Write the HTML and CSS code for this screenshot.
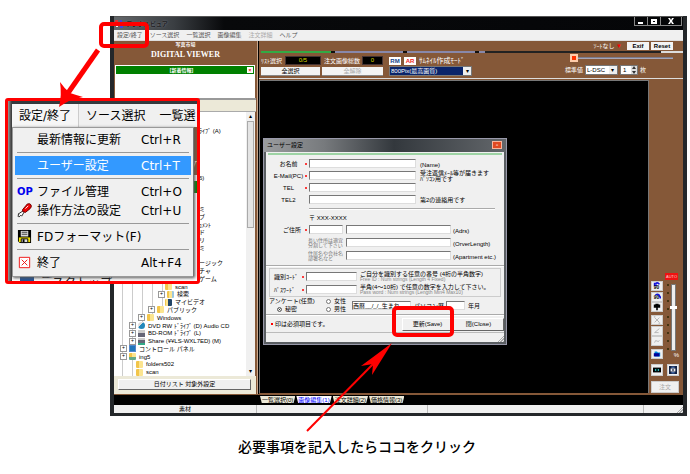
FILE: index.html
```html
<!DOCTYPE html>
<html lang="ja">
<head>
<meta charset="utf-8">
<title>DIGITAL VIEWER</title>
<link rel="stylesheet" href="styles.css">
</head>
<body>
<main class="stage">
  <section class="window">
    <header class="titlebar">
      <svg class="app-icon" viewBox="0 0 8 8"><path fill="#d33" d="M0 0h3v3H0z"/><path fill="#fc3" d="M3 2h3v3H3z"/><path fill="#eee" d="M1 4h2v3H1z"/><path fill="#44d" d="M5 5h3v3H5zM5 0h2v2H5z"/></svg>
      <h1>デジタルビュア</h1>
      <div class="caption-buttons">
        <button aria-label="最小化"><svg viewBox="0 0 12 8"><path d="M3 5h5v2H3z"/></svg></button>
        <button aria-label="最大化"><svg viewBox="0 0 12 8"><path fill-rule="evenodd" d="M3 2h6v5H3zM5 4v1h2V4z"/></svg></button>
        <button aria-label="閉じる"><svg viewBox="0 0 12 8"><path d="M3 1h2l1 2 1-2h2L7 4l2 3H7L6 5 5 7H3l2-3z"/></svg></button>
      </div>
    </header>
    <nav class="menubar">
      <button>設定/終了</button><button>ソース選択</button><button>一覧選択</button><button>画像編集</button><button disabled>注文詳細</button><button>ヘルプ</button>
    </nav>
    <div class="content">
      <aside class="sidebar">
        <div class="brand"><small>写真市場</small><strong>DIGITAL VIEWER</strong></div>
        <div class="news"><div class="news-head"><span>[新着情報]</span><button aria-label="消す">×</button></div></div>
        <div class="tree-head"></div>
        <div class="tree-box">
          <ul class="tree">
            <li></li><li></li>
            <li class="far">ﾗｲﾌﾞ (A)</li>
            <li></li><li></li><li></li><li></li><li></li>
            <li class="far">6)</li>
            <li></li><li></li><li></li>
            <li class="far">ミ</li>
            <li class="far">ブ</li>
            <li class="far">ｭﾒﾝﾄ</li>
            <li class="far">ド</li>
            <li class="far">リ</li>
            <li class="far">ミ</li>
            <li></li>
            <li class="far">ージック</li>
            <li class="far">チャ</li>
            <li class="far">ゲーム</li>
            <li class="d5"><i class="folder"></i>scan</li>
            <li class="d5 plus"><i class="folder find"></i>検索</li>
            <li class="d5"><i class="folder video"></i>マイビデオ</li>
            <li class="d4 plus"><i class="folder"></i>パブリック</li>
            <li class="d3 plus"><i class="folder"></i>Windows</li>
            <li class="d2 plus"><i class="disc"></i>DVD RW ﾄﾞﾗｲﾌﾞ (D) Audio CD</li>
            <li class="d2 plus"><i class="drive"></i>BD-ROM ﾄﾞﾗｲﾌﾞ (L)</li>
            <li class="d2 plus"><i class="drive net"></i>Share (¥¥LS-WXL7ED) (M)</li>
            <li class="d1 plus"><i class="panel"></i>コントロール パネル</li>
            <li class="d1 plus"><i class="folder user"></i>ing5</li>
            <li class="d2"><i class="folder"></i>folders502</li>
            <li class="d2"><i class="folder"></i>scan</li>
          </ul>
          <div class="scrollbar"><span>▴</span><b></b><span>▾</span></div>
        </div>
        <div class="tree-foot"><button class="raised">日付リスト 対象外設定</button></div>
      </aside>
      <section class="viewer">
        <div class="toolbar">
          <div class="tb-left">
            <span class="lbl">ﾘｽﾄ選択</span><output class="lcd">0/5</output>
            <span class="lbl">注文画像総数</span><output class="lcd small">0</output>
            <button class="wide pick">全選択</button><button class="wide clear" disabled>全解除</button>
          </div>
          <div class="tb-mid">
            <div class="mode"><button class="rm">RM</button><button class="ar">AR</button><label for="mode">ｻﾑﾈｲﾙ作成ﾓｰﾄﾞ</label></div>
            <span class="picker navy"><select id="mode"><option>800Pix(最高画質)</option></select></span>
          </div>
          <div class="tb-right">
            <div class="sort"><span>ｿｰﾄなし <em>▼</em></span><button>Exif</button><button>Reset</button></div>
            <input class="size-range" type="range" min="0" max="100" value="0" aria-label="サイズ">
            <div class="std"><label for="std">標準値</label><span class="picker"><select id="std"><option>L-DSC</option></select></span><span class="spin"><input id="qty" value="1" aria-label="枚数"><svg viewBox="0 0 6 8"><path d="M3 0l2 3H1zM3 8L1 5h4z"/></svg></span><label for="qty">枚</label></div>
          </div>
          <div class="progress"><i></i><i></i><i></i></div>
        </div>
        <div class="work">
          <div class="canvas">
            <form class="dialog">
              <header class="dlg-title"><h2>ユーザー設定</h2><button type="button" aria-label="閉じる">▫</button></header>
              <div class="dlg-body">
                <div class="accent"></div>
                <div class="contact">
                  <label class="req" for="name">お名前</label><input id="name"><span class="en">(Name)</span>
                  <label class="req" for="mail">E-Mail(PC)</label><input id="mail"><span class="two">受注返信ﾒｰﾙ等が届きます<br>ﾊﾟｿｺﾝ用です</span>
                  <label class="req" for="tel">TEL</label><input id="tel"><span></span>
                  <label for="tel2">TEL2</label><input id="tel2"><span>第2の連絡用です</span>
                </div>
                <hr class="inset">
                <div class="address">
                  <span class="post">〒 XXX-XXXX</span>
                  <label class="req who" for="zip">ご住所</label><input id="zip"><input aria-label="住所"><span class="en">(Adrs)</span>
                  <span class="hint">長い住所は適宜<br>分割して下さい</span><input aria-label="住所2"><span class="en">(OrverLength)</span>
                  <span class="hint">住居名や会社名<br>部署名など</span><input aria-label="住所3"><span class="en">(Apartment etc.)</span>
                </div>
                <hr>
                <div class="secret">
                  <label class="req" for="code">識別ｺｰﾄﾞ</label><input id="code"><p>ご自分を識別する任意の番号 (4桁の半角数字)<small>Free ID : Num strings (Length 4 Fixed)</small></p>
                  <label class="req" for="pass">ﾊﾟｽﾜｰﾄﾞ</label><input id="pass"><p>半角(4～10桁) で任意の数字を入力して下さい。<small>Pass word : Num strings (Length Min4 Max10)</small></p>
                </div>
                <div class="survey">
                  <div class="q"><span>アンケート(任意)</span><label><input type="radio" name="sex" checked>秘密</label></div>
                  <div class="q2"><label><input type="radio" name="sex">女性</label><label><input type="radio" name="sex">男性</label></div>
                  <input class="birth" value="西暦__/_/_生まれ" aria-label="生年月日"><label for="years">パソコン歴</label><input class="years" id="years"><span class="ym">年月</span>
                </div>
                <hr>
                <div class="actions"><span class="note">印は必須項目です。</span><button type="button" class="raised save">更新(Save)</button><button type="button" class="raised">閉(Close)</button></div>
                <div class="dlg-status"><i class="grip"></i></div>
              </div>
              <div class="ring save-ring"></div>
            </form>
          </div>
          <aside class="tools">
            <div class="tool-main">
              <div class="tool-col">
                <button aria-label="左回転"><svg viewBox="0 0 10 10"><path class="blue" d="M3 2q3-2 5 1M2 1v3h3"/><text x="1" y="9">90</text></svg></button>
                <button aria-label="右回転"><svg viewBox="0 0 10 10"><path class="blue" d="M8 5V3Q5 0 3 3M9 7V4"/><text x="1" y="8">90</text></svg></button>
                <button aria-label="反転"><svg viewBox="0 0 10 10"><path d="M3 1h4v1h2v4H6v3H4V6H1V2h2z"/></svg></button>
                <button class="gap" aria-label="切り取り"><svg viewBox="0 0 10 10"><path class="gray" d="M2 2l6 6M8 2L2 8M1 1h2M7 9h2"/></svg></button>
                <button aria-label="線"><svg viewBox="0 0 10 10"><path class="gray" d="M8 2L2 7h5"/></svg></button>
                <button aria-label="曲線"><svg viewBox="0 0 10 10"><path class="gray" d="M2 7q1-4 3-2t3-1"/></svg></button>
                <button class="gap" aria-label="フォルダ"><svg viewBox="0 0 10 10"><path fill="#08d" d="M2 2h3l1 1h3v5H2z"/><path fill="#009" d="M1 4h7v4H1z"/></svg></button>
              </div>
              <div class="level"><i class="dots"></i><input type="range" value="66" aria-label="明るさ"></div>
              <span class="auto">AUTO</span><span class="pct">%</span>
            </div>
            <div class="pair">
              <button aria-label="全体"><svg viewBox="0 0 10 10"><path d="M0 2h10v6H0z"/><path fill="#3dd" d="M2 5l2-2v4zM8 5L6 3v4z"/></svg></button>
              <button aria-label="拡大"><svg viewBox="0 0 10 10"><path fill="#124" d="M0 0h10v3H0zM0 7h10v3H0zM0 3h2v4H0zM8 3h2v4H8zM4 4h2v2H4z"/><path fill="#7af" d="M3 1h4v1H3zM3 8h4v1H3z"/></svg></button>
            </div>
            <button class="order" disabled>注文</button>
          </aside>
        </div>
      </section>
    </div>
    <nav class="tabs"><a href="#t0">一覧選択(0)</a><a href="#t1" class="on">画像編集(1)</a><a href="#t2">注文詳細(2)</a><a href="#t3">価格情報(3)</a></nav>
    <footer class="status"><span>素材</span><span></span><span></span><span><i class="grip"></i></span></footer>
  </section>
  <p class="caption">必要事項を記入したらココをクリック</p>

  <section class="callout">
    <div class="behind"><b>V</b></div>
    <nav class="big-menubar"><button class="open">設定/終了</button><button>ソース選択</button><button>一覧選</button></nav>
    <div class="big-menu">
      <button><i></i><span>最新情報に更新</span><kbd>Ctrl+R</kbd></button>
      <hr>
      <button class="active"><i></i><span>ユーザー設定</span><kbd>Ctrl+T</kbd></button>
      <hr>
      <button><i class="op">OP</i><span>ファイル管理</span><kbd>Ctrl+O</kbd></button>
      <button><svg viewBox="0 0 16 16"><path fill="#fff" stroke="#222" d="M1 12l6-4 1 1-3 5-1-1-2 2-1-1 1-2z"/><path fill="#e00" stroke="#600" d="M6 7l5-6q3-1 4 1t-1 4l-5 4-3-1z"/><path stroke="#fff" d="M9 6l3-3"/></svg><span>操作方法の設定</span><kbd>Ctrl+U</kbd></button>
      <hr>
      <button><svg viewBox="0 0 16 16"><path d="M1 1h14v14H3l-2-2z"/><path fill="#ddd" d="M4 2h8v6H4z"/><path fill="#444" d="M5 3h6v1H5zM5 5h6v1H5z"/><path fill="#f5e500" d="M2 9h12v5H2z"/><path fill="#ddd" stroke="#000" d="M4.500 10.500h7v4h-7z"/><path d="M6 11h2v3H6z"/></svg><span>FDフォーマット(F)</span></button>
      <hr>
      <button><svg viewBox="0 0 16 16"><path fill="#fff" stroke="#e11" d="M2.500 2.500h11v11h-11zM5 5l6 6M11 5l-6 6"/></svg><span>終了</span><kbd>Alt+F4</kbd></button>
    </div>
    <div class="peek"><i></i><span>デスクトップ</span></div>
  </section>
  <div class="ring menu-ring"></div>
  <svg class="arrows" viewBox="0 0 690 474"><path d="M98 50L68 93" stroke="#f00" stroke-width="5"/><path fill="#f00" d="M59 107Q62 95 60 82Q64 88 70 93Q76 95 83 97Q70 99 59 107Z"/><path d="M307 431L378 359" stroke="#f00" stroke-width="2"/><path fill="#f00" d="M392 343L361 366L373 364L372 375Z"/></svg>
</main>
</body>
</html>
```

FILE: styles.css
```css
* { box-sizing: border-box; }
body {
  margin: 0;
  background: #fff;
  color: #000;
  font: 6px/8px "Liberation Sans", "Noto Sans CJK JP", sans-serif;
}
h1, h2, p, ul { margin: 0; padding: 0; font: inherit; }
ul { list-style: none; }
button, input, select { font: inherit; color: inherit; margin: 0; padding: 0; border: 0; border-radius: 0; outline: 0; }
button { background: none; white-space: nowrap; }
svg { display: block; }
.stage { position: relative; padding: 16px 3px 0 110px; }

/* main window */
.window {
  border: solid #24272a;
  border-width: 0 4px 3px;
  background: #000;
}
.titlebar { height: 14px; display: flex; align-items: center; border-top: 1px solid #555; background: linear-gradient(90deg, #64686b, #3a3e42 60px, #08090b 110px, #050608); }
.app-icon { width: 8px; height: 8px; margin: 0 3px 0 1px; }
.titlebar h1 { font-size: 6px; color: #000; flex: 1; text-shadow: 0 0 2px #99a; }
.caption-buttons { display: flex; align-self: start; margin-right: 1px; }
.caption-buttons button { width: 14px; height: 9px; border: 1px solid #888; border-top: 0; margin-left: -1px; }
.caption-buttons button:last-child { width: 22px; }
.caption-buttons svg { width: 12px; height: 8px; margin: auto; fill: #fff; }
.menubar { height: 11px; background: #f0f0f0; display: flex; gap: 7px; padding-left: 3px; border-bottom: 1px solid #ddd; }
.menubar button { color: #555; }
.menubar button:disabled { color: #aaa; }
.content { display: flex; height: 353px; }

/* left panel */
.sidebar { width: 144px; background: #855838; display: flex; flex-direction: column; border-right: 1px solid #c9a68c; }
.brand { height: 24px; color: #fff; text-align: center; display: flex; flex-direction: column; }
.brand small { font-size: 5px; line-height: 7px; font-weight: bold; }
.brand strong { font: bold 8px/14px "Liberation Serif", serif; }
.news { height: 33px; margin: 0 2px 0 1px; background: #fff; padding: 1px; }
.news-head { height: 8px; background: #008000; color: #fff; display: flex; align-items: center; font-size: 5px; font-weight: bold; }
.news-head span { flex: 1; text-align: center; }
.news-head button { width: 6px; height: 6px; background: #fff; color: #e00; line-height: 6px; margin-right: 1px; }
.tree-head { height: 14px; background: #ece9d8; border-top: 2px solid #999; border-bottom: 1px solid #aaa; margin-right: 1px; }
.tree-box { flex: 1; min-height: 0; background: #fff; display: flex; margin: 0 2px 0 0; overflow: hidden; }
.tree { flex: 1; display: grid; grid-auto-rows: 1fr; min-width: 0; }
.tree li { min-height: 0; line-height: 8px; display: flex; align-items: center; white-space: nowrap; background: repeating-linear-gradient(90deg, #ccc 0 1px, transparent 1px 10px) 8px 0 / 0 100% no-repeat; }
.tree .far { padding-left: 85px; }
.tree li.d1 { padding-left: 13px; background-size: 1px 100%; }
.tree li.d2 { padding-left: 22px; background-size: 11px 100%; }
.tree li.d3 { padding-left: 31px; background-size: 21px 100%; }
.tree li.d4 { padding-left: 41px; background-size: 31px 100%; }
.tree li.d5 { padding-left: 51px; background-size: 41px 100%; }
.tree .plus::before { content: "+"; width: 5px; height: 5px; margin-left: -7px; margin-right: 2px; border: 1px solid #999; background: #fff; font-size: 5px; line-height: 3px; text-align: center; }
.tree i { width: 7px; height: 7px; margin-right: 3px; flex: none; }
.folder { background: linear-gradient(90deg, #f2c54a 40%, #fbe48f 40%); border-radius: 1px; }
.folder.find { border-right: 2px solid #9cc7e0; }
.folder.video { border-right: 4px solid #246; }
.folder.user { border-bottom: 3px solid #6a8; }
.disc { border-radius: 4px; background: linear-gradient(135deg, #ddd 40%, #28b 40%); }
.drive { background: linear-gradient(#ccc 40%, #667 40%); }
.drive.net { border-bottom: 2px solid #3a8; }
.panel { background: #27b; border: 1px solid #58c; }
.scrollbar { width: 9px; background: #f0f0f0; display: flex; flex-direction: column; align-items: center; line-height: 9px; }
.scrollbar b { width: 7px; height: 107px; border: 1px solid #aaa; background: #e4e4e4; margin-bottom: auto; }
.tree-foot { height: 18px; background: #ece9d8; padding: 3px 5px 4px 4px; margin-right: 1px; }
.raised { background: #f0f0f0; border: 1px solid; border-color: #fff #666 #666 #fff; }
.tree-foot .raised { width: 100%; height: 11px; line-height: 9px; }

/* right panel */
.viewer { flex: 1; min-width: 0; margin-left: 1px; background: #855838; display: flex; flex-direction: column; }
.toolbar { display: flex; height: 38px; border-bottom: 1px solid #ddd; margin-bottom: 1px; color: #fff; position: relative; padding: 0 10px 2px 2px; }
.tb-left { display: grid; grid-template-columns: 24px 36px 3px 38px 21px; align-content: end; align-items: center; gap: 2px 0; }
.lcd { height: 9px; background: #000; color: #dd0; text-align: center; border: 1px solid #433; line-height: 7px; }
.tb-left .lbl:nth-of-type(2) { grid-column: 4; }
.wide { height: 9px; background: #f4f4f4; color: #000; line-height: 9px; border-bottom: 1px solid #888; }
.wide.pick { grid-column: 1 / 3; margin-right: 1px; }
.wide.clear { grid-column: 3 / 6; margin-left: 1px; }
.wide:disabled { color: #aaa; }
.tb-mid { display: flex; flex-direction: column; justify-content: flex-end; gap: 1px; margin-left: 6px; width: 83px; }
.mode { display: flex; gap: 3px; align-items: center; }
.mode label { font-size: 7px; white-space: nowrap; }
.mode button { width: 12px; background: #fff; color: #148; font-weight: bold; height: 8px; }
.mode .ar { color: #e22; }
.picker { position: relative; display: block; height: 10px; color: #000; }
.picker select { width: 100%; height: 100%; appearance: none; background: #fff; padding-left: 1px; border: 1px solid #777; display: block; line-height: 8px; }
.picker::after { content: "▾"; position: absolute; right: 1px; top: 1px; bottom: 1px; width: 8px; background: #eee; text-align: center; line-height: 8px; }
.picker.navy select { background: #0a246a; color: #fff; }
.tb-right { margin-left: auto; width: 107px; display: flex; flex-direction: column; align-items: flex-end; padding-top: 1px; }
.sort { display: flex; gap: 2px; align-items: center; }
.sort span { margin-right: 3px; white-space: nowrap; }
.sort em { color: #f00; font-style: normal; }
.sort button { background: #f4f4f4; color: #000; font-weight: bold; width: 22px; height: 8px; line-height: 8px; }
.size-range { appearance: none; width: 103px; height: 8px; margin-top: 4px; background: linear-gradient(transparent 3px, #667 3px, #bbc 5px, transparent 5px); }
.size-range::-webkit-slider-thumb { appearance: none; width: 8px; height: 8px; background: #f30; border: 2px solid #fca; }
.std { display: flex; align-items: center; gap: 2px; margin: 3px 27px 0 0; white-space: nowrap; }
.std .picker { width: 33px; }
.spin { display: flex; width: 18px; height: 10px; background: #fff; color: #000; border: 1px solid #777; }
.spin input { width: 10px; min-width: 0; padding-left: 2px; background: none; }
.spin svg { width: 6px; height: 8px; background: #ddd; fill: #333; }
.progress { position: absolute; left: 2px; right: 0; top: 10px; height: 2px; background: linear-gradient(90deg, #3a4 72px, #88a 72px, #88a 224px, #222 224px, #222 400px, #ddd 400px); display: flex; gap: 68px; padding-left: 70px; }
.progress i { width: 4px; height: 2px; background: #111; }
.work { flex: 1; min-height: 0; display: flex; }
.canvas { flex: 1; min-width: 0; position: relative; background: #000; border: solid #777; border-width: 1px 1px 0 1px; margin-bottom: 1px; }
.tools { width: 34px; padding: 193px 4px 0 2px; color: #fff; }
.tool-main { display: flex; position: relative; gap: 4px; padding-top: 8px; height: 91px; }
.tool-col { width: 12px; }
.tools button { display: block; width: 12px; height: 10px; background: #f0f0f0; border: 1px solid #ccc; margin-bottom: 1px; }
.tool-col button:nth-child(2), .tool-col button:nth-child(5) { margin-bottom: 0; }
.tool-col .gap { margin-top: 3px; }
.tools svg { width: 8px; height: 8px; margin: auto; fill: #000; }
.tools svg text { font: bold 6px "Liberation Sans", sans-serif; }
.tools .blue { fill: none; stroke: #11d; stroke-width: 2; }
.tools .gray { fill: none; stroke: #aaa; }
.level { display: flex; gap: 2px; padding-top: 3px; }
.dots { width: 2px; height: 66px; background: repeating-linear-gradient(#431 0 2px, transparent 2px 8px); }
.level input { appearance: none; writing-mode: vertical-lr; direction: rtl; width: 5px; height: 67px; background: #eee; border: 1px solid #777; }
.level input::-webkit-slider-thumb { appearance: none; width: 7px; height: 3px; background: #fff; }
.auto { position: absolute; right: 1px; top: 0; width: 13px; height: 7px; background: #e11; color: #fcc; font-size: 4px; line-height: 7px; text-align: center; }
.pct { position: absolute; right: 0; top: 78px; }
.pair { display: flex; justify-content: space-between; }
.tools .pair button { height: 12px; margin: 0; }
.tools .order { width: 100%; height: 12px; margin: 5px 0 0; color: #aaa; line-height: 10px; }

/* bottom strips */
.tabs { height: 11px; display: flex; gap: 1px; padding: 1px 0 2px 146px; border-top: 1px solid #855838; }
.tabs a { color: #000; background: #ece9d8; text-decoration: none; padding: 0 2px; clip-path: polygon(0 0, 100% 0, 95% 100%, 5% 100%); }
.tabs .on { color: #00f; background: #fff; }
.status { height: 8px; background: #f0f0f0; display: grid; grid-template-columns: 143px 171px 1fr 39px; }
.status span { border-right: 1px solid #bbb; text-align: center; position: relative; }
.status span:last-child { border: 0; }
.grip { position: absolute; right: 0; bottom: 0; width: 7px; height: 7px; background: repeating-linear-gradient(135deg, #f0f0f0 0 1px, #aaa 1px 2px); clip-path: polygon(100% 0, 100% 100%, 0 100%); }
.caption { position: relative; margin-left: 128px; padding-top: 18px; font: 500 14px/24px "Noto Sans CJK JP", sans-serif; }

/* settings dialog */
.dialog { position: absolute; left: 3px; top: 57px; width: 244px; border: 3px solid #5a5e62; border-top: 0; outline: 1px solid #99a; outline-offset: -1px; background: #f0f0f0; }
.dlg-title { height: 14px; margin: 0 -2px; padding: 0 4px 0 3px; display: flex; align-items: center; justify-content: space-between; background: linear-gradient(90deg, #9a9c9e, #777a7d 60px, #33383d 130px, #63676b); }
.dlg-title h2 { font-size: 6px; }
.dlg-title button { width: 10px; height: 8px; background: #e04a22; border: 1px solid #f9b59c; color: #fff; line-height: 6px; }
.dlg-body { position: relative; }
.accent { height: 2px; background: #9dd3a4; margin: 1px 2px 0; }
.dlg-body hr { border: 0; border-top: 1px solid #aaa; border-bottom: 1px solid #fff; margin: 0; height: 2px; }
.dlg-body hr.inset { margin: 4px 9px 3px 43px; }
.dlg-body input:not([type]) { height: 9px; width: 100%; background: #fff; border: solid #777; border-width: 1px 0 0 1px; border-right: 1px solid #ddd; border-bottom: 1px solid #ddd; }
.dlg-body label, .dlg-body span { white-space: nowrap; }
.req { position: relative; }
.req::after { content: ""; position: absolute; right: 2px; top: 3px; width: 2px; height: 2px; background: #f00; border-radius: 1px; }
.contact { display: grid; grid-template-columns: 43px 107px 1fr; grid-auto-rows: 9px; row-gap: 3px; padding-top: 4px; align-items: center; }
.contact label { text-align: center; padding-left: 2px; }
.contact > span { padding-left: 4px; }
.contact .two { line-height: 6px; }
.contact .en { padding-top: 3px; }
.address { display: grid; grid-template-columns: 43px 34px 3px 105px 1fr; grid-template-rows: 8px 9px 9px 9px; row-gap: 4px; align-items: center; padding-bottom: 5px; }
.post { grid-column: 2 / -1; }
.address .post { height: 4px; line-height: 6px; }
.who { text-align: right; padding-right: 8px; }
.address input + input, .hint + input { grid-column: 4; }
.hint { grid-column: 1 / 4; font-size: 5px; line-height: 5px; color: #777; padding-left: 42px; }
.en { padding: 3px 0 0 2px; }
.secret { display: grid; grid-template-columns: 36px 51px 1fr; row-gap: 2px; margin: 1px 3px 0; padding: 2px 0 1px; border: 1px solid #ccc; align-items: center; }
.secret label { padding-left: 4px; }
.secret p { padding-left: 3px; line-height: 6px; white-space: nowrap; }
.secret small { display: block; font-size: 5px; line-height: 5px; color: #888; }
.survey { display: flex; height: 17px; padding-left: 3px; }
.q { width: 57px; }
.q2 { width: 26px; }
.q label, .q2 label, .q span { display: flex; align-items: center; height: 8px; }
.q label { padding-left: 8px; }
.survey input[type="radio"] { appearance: none; width: 5px; height: 5px; border: 1px solid #777; border-radius: 3px; background: #fff; margin-right: 3px; }
.survey input[type="radio"]:checked { background: #000; box-shadow: inset 0 0 0 1px #fff; }
.survey .birth:not([type]) { width: 59px; margin-top: 4px; }
.survey .years:not([type]) { width: 19px; margin: 4px 0 0 2px; }
.survey > label, .ym { padding: 5px 0 0 3px; }
.actions { display: flex; height: 17px; align-items: center; border-bottom: 1px solid #bbb; }
.note { flex: 1; padding-left: 9px; position: relative; }
.note::before { content: ""; position: absolute; left: 5px; top: 3px; width: 2px; height: 2px; background: #f00; }
.actions .raised { width: 51px; height: 13px; }
.dlg-status { height: 9px; position: relative; }

/* magnified menu */
.callout { position: absolute; left: 5px; top: 98px; width: 195px; border: 3px solid #f00; border-radius: 3px; overflow: hidden; background: #fff; font: 12px/16px "DejaVu Sans", "Noto Sans CJK JP", sans-serif; }
.callout::before { content: ""; position: absolute; inset: 0 auto 0 0; width: 4px; background: linear-gradient(90deg, #999, #333); }
.big-menubar { position: relative; display: flex; height: 26px; border-top: 3px solid #35393d; margin-left: 4px; background: #f0f0f0; }
.big-menubar button { padding: 0 7px; flex: none; }
.big-menubar button:last-child { padding-right: 0; }
.big-menubar .open { background: #f6f6f6; border-right: 1px solid #ccc; }
.behind { position: absolute; right: 0; top: 26px; bottom: 0; width: 12px; text-align: right; background: linear-gradient(#855838 48px, #eee 48px, #eee 54px, #008000 54px, #008000 66px, #fff 66px); }
.behind b { display: block; color: #fff; padding-top: 30px; font-family: "Liberation Serif", serif; font-weight: bold; height: 48px; }
.big-menu { position: relative; width: 182px; margin-left: 4px; padding: 2px 2px 4px; background: #f0f0f0; border: 1px solid #999; border-right-color: #777; box-shadow: 1px 1px 3px #555; }
.big-menu button { width: 100%; height: 19px; display: grid; grid-template-columns: 14px 102px 1fr; column-gap: 4px; align-items: center; text-align: left; padding: 0 2px; }
.big-menu button > :first-child { width: 15px; height: 15px; }
.big-menu button > span { padding-left: 2px; }
.big-menu kbd { font: inherit; }
.big-menu hr { border: 0; border-top: 1px solid #999; margin: 3px 2px; }
.big-menu .active { background: #39f; color: #fff; }
.big-menu .op { font: bold 10px/15px "DejaVu Sans", sans-serif; color: #00e; }
.peek { height: 4px; display: flex; gap: 6px; padding-left: 12px; overflow: hidden; }
.peek i { width: 14px; height: 8px; background: #259; }
.peek span { line-height: 12px; }

/* annotations */
.ring { position: absolute; border: 4px solid #f00; border-radius: 5px; pointer-events: none; }
.menu-ring { left: 99px; top: 22px; width: 50px; height: 26px; }
.save-ring { left: 126px; top: 168px; width: 62px; height: 31px; }
.arrows { position: absolute; left: 0; top: 0; width: 690px; height: 474px; pointer-events: none; }
```
